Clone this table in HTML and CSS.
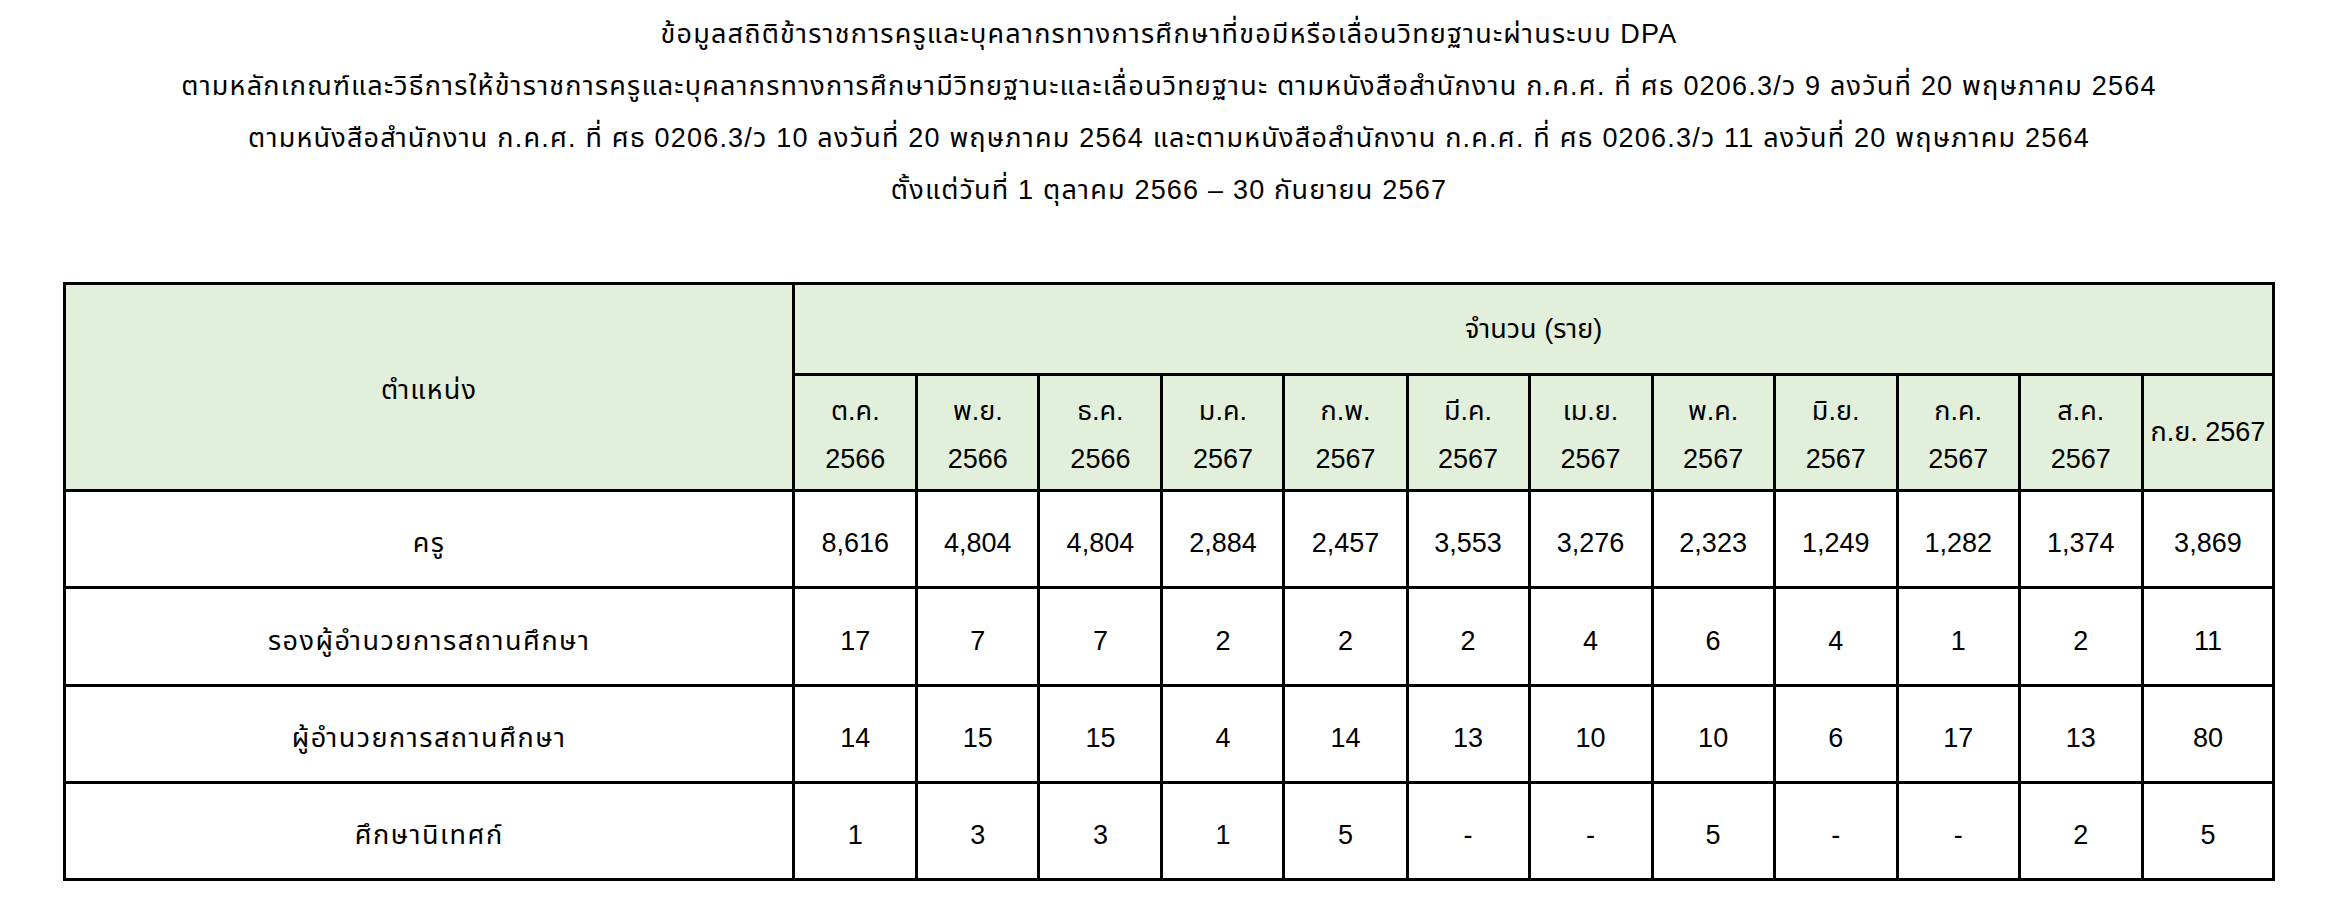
FILE: index.html
```html
<!DOCTYPE html>
<html lang="th">
<head>
<meta charset="utf-8">
<title>ข้อมูลสถิติ DPA</title>
<link rel="stylesheet" href="styles.css">
</head>
<body>
<header class="title">
  <div class="title-line">ข้อมูลสถิติข้าราชการครูและบุคลากรทางการศึกษาที่ขอมีหรือเลื่อนวิทยฐานะผ่านระบบ DPA</div>
  <div class="title-line">ตามหลักเกณฑ์และวิธีการให้ข้าราชการครูและบุคลากรทางการศึกษามีวิทยฐานะและเลื่อนวิทยฐานะ ตามหนังสือสำนักงาน ก.ค.ศ. ที่ ศธ 0206.3/ว 9 ลงวันที่ 20 พฤษภาคม 2564</div>
  <div class="title-line">ตามหนังสือสำนักงาน ก.ค.ศ. ที่ ศธ 0206.3/ว 10 ลงวันที่ 20 พฤษภาคม 2564 และตามหนังสือสำนักงาน ก.ค.ศ. ที่ ศธ 0206.3/ว 11 ลงวันที่ 20 พฤษภาคม 2564</div>
  <div class="title-line">ตั้งแต่วันที่ 1 ตุลาคม 2566 – 30 กันยายน 2567</div>
</header>

<table class="stats">
  <colgroup>
    <col class="c-pos">
    <col class="c-m"><col class="c-m2"><col class="c-m"><col class="c-m2"><col class="c-m">
    <col class="c-m2"><col class="c-m"><col class="c-m2"><col class="c-m"><col class="c-m2"><col class="c-m">
    <col class="c-last">
  </colgroup>
  <thead>
    <tr class="r-h1">
      <th rowspan="2" class="h pos">ตำแหน่ง</th>
      <th colspan="12" class="h">จำนวน (ราย)</th>
    </tr>
    <tr class="r-h2">
      <th class="h m">ต.ค.<br>2566</th>
      <th class="h m">พ.ย.<br>2566</th>
      <th class="h m">ธ.ค.<br>2566</th>
      <th class="h m">ม.ค.<br>2567</th>
      <th class="h m">ก.พ.<br>2567</th>
      <th class="h m">มี.ค.<br>2567</th>
      <th class="h m">เม.ย.<br>2567</th>
      <th class="h m">พ.ค.<br>2567</th>
      <th class="h m">มิ.ย.<br>2567</th>
      <th class="h m">ก.ค.<br>2567</th>
      <th class="h m">ส.ค.<br>2567</th>
      <th class="h last">ก.ย. 2567</th>
    </tr>
  </thead>
  <tbody>
    <tr class="r-a">
      <td class="pos">ครู</td>
      <td>8,616</td><td>4,804</td><td>4,804</td><td>2,884</td><td>2,457</td><td>3,553</td>
      <td>3,276</td><td>2,323</td><td>1,249</td><td>1,282</td><td>1,374</td><td>3,869</td>
    </tr>
    <tr class="r-b">
      <td class="pos">รองผู้อำนวยการสถานศึกษา</td>
      <td>17</td><td>7</td><td>7</td><td>2</td><td>2</td><td>2</td>
      <td>4</td><td>6</td><td>4</td><td>1</td><td>2</td><td>11</td>
    </tr>
    <tr class="r-c">
      <td class="pos">ผู้อำนวยการสถานศึกษา</td>
      <td>14</td><td>15</td><td>15</td><td>4</td><td>14</td><td>13</td>
      <td>10</td><td>10</td><td>6</td><td>17</td><td>13</td><td>80</td>
    </tr>
    <tr class="r-d">
      <td class="pos">ศึกษานิเทศก์</td>
      <td>1</td><td>3</td><td>3</td><td>1</td><td>5</td><td>-</td>
      <td>-</td><td>5</td><td>-</td><td>-</td><td>2</td><td>5</td>
    </tr>
  </tbody>
</table>
</body>
</html>
```

FILE: styles.css
```css
html, body {
  margin: 0;
  padding: 0;
  background: #ffffff;
  color: #000000;
}

body {
  font-family: "Liberation Sans", "Noto Sans Thai", "Noto Sans", sans-serif;
}

.title {
  padding-top: 8px;
  text-align: center;
  font-size: 27px;
  line-height: 52px;
  letter-spacing: 1.2px;
}

.title-line {
  white-space: nowrap;
}

.stats {
  margin-top: 66px;
  margin-left: 63px;
  table-layout: fixed;
  width: 2212px;
  border-collapse: separate;
  border-spacing: 0;
  border-top: 3px solid #000;
  border-left: 3px solid #000;
  font-size: 27px;
}

.c-pos { width: 729px; }
.c-m { width: 123px; }
.c-m2 { width: 122px; }
.c-last { width: 131px; }

.stats th,
.stats td {
  box-sizing: border-box;
  padding: 0;
  border-right: 3px solid #000;
  border-bottom: 3px solid #000;
  text-align: center;
  vertical-align: middle;
  font-weight: normal;
  white-space: nowrap;
}

.stats th.h {
  background: #e2efda;
}

.stats th.pos {
  padding-top: 6px;
  letter-spacing: 1.2px;
}

.stats th.m {
  line-height: 48px;
  padding-top: 4px;
}

.r-h1 { height: 91px; }
.r-h2 { height: 116px; }
.r-a { height: 97px; }
.r-b { height: 98px; }
.r-c { height: 97px; }
.r-d { height: 97px; }

.stats td {
  padding-top: 9px;
}

.stats td.pos {
  letter-spacing: 1.5px;
}
```
